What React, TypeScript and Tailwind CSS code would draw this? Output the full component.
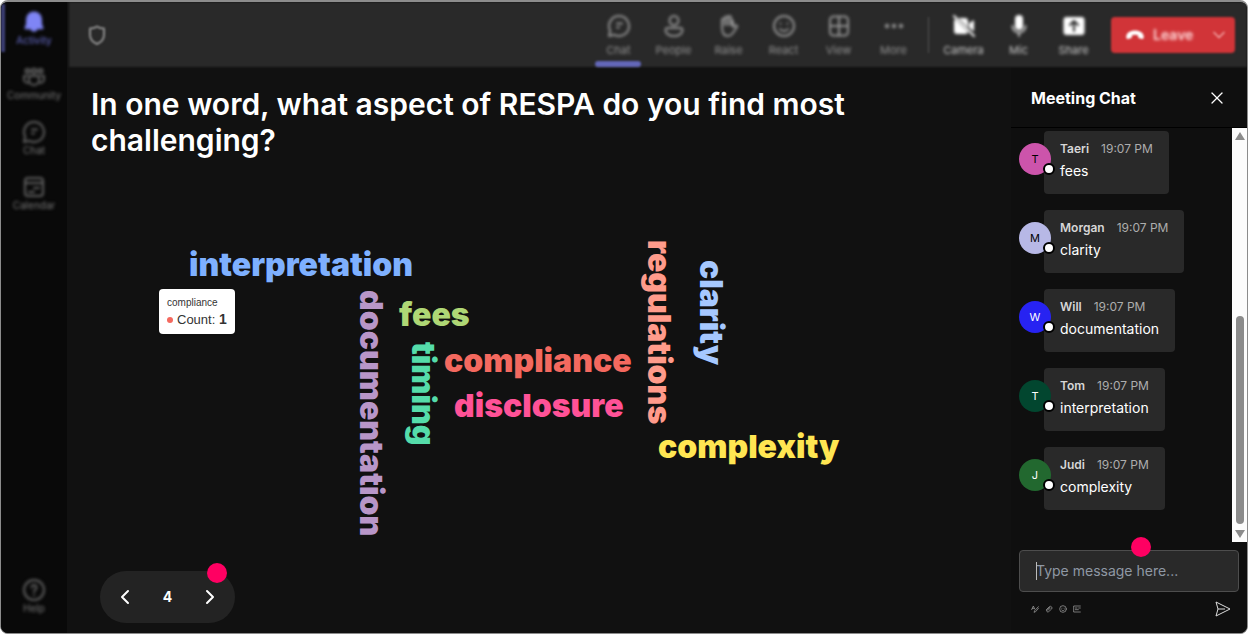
import React from 'react';
import { ChevronDown, ChevronLeft, ChevronRight, X } from 'lucide-react';

interface IconProps {
  className?: string;
}

interface NavItem {
  label: string;
  icon: React.FC<IconProps>;
  bright?: boolean;
  active?: boolean;
}

interface Message {
  name: string;
  text: string;
  time: string;
  avatar: string;
}

const Line: React.FC<IconProps & { children: React.ReactNode }> = ({ className, children }) => (
  <svg
    className={className}
    viewBox="0 0 24 24"
    fill="none"
    stroke="currentColor"
    strokeWidth={2}
    strokeLinecap="round"
    strokeLinejoin="round"
    aria-hidden="true"
  >
    {children}
  </svg>
);

const BellIcon: React.FC<IconProps> = ({ className }) => (
  <svg className={className} viewBox="0 0 24 24" fill="currentColor" aria-hidden="true">
    <path d="M12 1.500a8 8 0 0 0-8 8V14l-1.500 4c-.2.7.2 1.200 1 1.200h17c.8 0 1.200-.5 1-1.200L20 14V9.500a8 8 0 0 0-8-8zM8.500 19a3.600 3.600 0 0 0 7 0z" />
  </svg>
);

const CommunityIcon: React.FC<IconProps> = ({ className }) => (
  <Line className={className}>
    <circle cx="5.500" cy="6" r="2" />
    <circle cx="12" cy="6" r="2.300" />
    <circle cx="18.500" cy="6" r="2" />
    <path d="M7 11h10v4a5 5 0 0 1-10 0zM4.500 11H2v3a4 4 0 0 0 4 4M19.500 11H22v3a4 4 0 0 1-4 4" />
  </Line>
);

const ChatIcon: React.FC<IconProps> = ({ className }) => (
  <Line className={className}>
    <path d="M12 2a10 10 0 1 1-4.700 18.800L2 22l1.200-5.300A10 10 0 0 1 12 2z" />
    <path d="M10 9.500h5M10 13.500h2" />
  </Line>
);

const CalendarIcon: React.FC<IconProps> = ({ className }) => (
  <Line className={className}>
    <rect x="3" y="3" width="18" height="18" rx="3" />
    <path d="M3 8h18M12 13h5M7 17h5" />
  </Line>
);

const HelpIcon: React.FC<IconProps> = ({ className }) => (
  <Line className={className}>
    <circle cx="12" cy="12" r="10" />
    <path d="M9.500 9.500a2.500 2.500 0 1 1 4 2c-1 .7-1.500 1.200-1.500 2.500M12 17v.2" />
  </Line>
);

const ShieldIcon: React.FC<IconProps> = ({ className }) => (
  <Line className={className}>
    <path d="M12 3.500c2 1.500 4.500 2 7 2V12c0 4-2.500 7-7 9-4.500-2-7-5-7-9V5.500c2.500 0 5-.5 7-2z" />
  </Line>
);

const PeopleIcon: React.FC<IconProps> = ({ className }) => (
  <Line className={className}>
    <circle cx="12" cy="6.500" r="4.500" />
    <path d="M5.500 14h13c1.200 0 2 .8 2 2 0 3.500-3.500 6-8.500 6s-8.500-2.500-8.500-6c0-1.200.8-2 2-2z" />
  </Line>
);

const HandIcon: React.FC<IconProps> = ({ className }) => (
  <Line className={className}>
    <path d="M5 13V6a1.500 1.500 0 0 1 3 0V4a1.500 1.500 0 0 1 3 0v-.5a1.500 1.500 0 0 1 3 0V6a1.500 1.500 0 0 1 2 1.500V13l2-1.500c1.500-.7 2.500.5 2 1.500l-4.500 6.500C14 21.500 13 22 11 22c-4 0-6-3-6-9z" />
    <path d="M8 6v5M11 4v7M14 6v5" />
  </Line>
);

const SmileIcon: React.FC<IconProps> = ({ className }) => (
  <Line className={className}>
    <circle cx="12" cy="12" r="10" />
    <path d="M8 15c1 1.300 2.300 2 4 2s3-.7 4-2M8.500 9.500v.2M15.500 9.500v.2" />
  </Line>
);

const GridIcon: React.FC<IconProps> = ({ className }) => (
  <Line className={className}>
    <rect x="3" y="2.500" width="18" height="19" rx="3.500" />
    <path d="M12 2.500v19M3 12h18" />
  </Line>
);

const MoreIcon: React.FC<IconProps> = ({ className }) => (
  <svg className={className} viewBox="0 0 24 24" fill="currentColor" aria-hidden="true">
    <circle cx="5" cy="12" r="2.200" />
    <circle cx="12" cy="12" r="2.200" />
    <circle cx="19" cy="12" r="2.200" />
  </svg>
);

const CameraOffIcon: React.FC<IconProps> = ({ className }) => (
  <svg className={className} viewBox="0 0 24 24" fill="currentColor" aria-hidden="true">
    <path d="M6.500 4H13a3 3 0 0 1 3 3v6.500zM3 5l13 13a3 3 0 0 1-2 2H5a3 3 0 0 1-3-3V7c0-.8.4-1.500 1-2zM17 9.500l4-3c.5-.4 1 0 1 .5v10.500l-5-4z" />
    <path d="m2 2 20 20" stroke="currentColor" strokeWidth="2" strokeLinecap="round" />
  </svg>
);

const MicIcon: React.FC<IconProps> = ({ className }) => (
  <svg className={className} viewBox="0 0 24 24" fill="currentColor" aria-hidden="true">
    <rect x="8" y="1" width="8" height="15" rx="4" />
    <path
      d="M5.500 12a6.500 6.500 0 0 0 13 0M12 18.500V22"
      fill="none"
      stroke="currentColor"
      strokeOpacity="0.7"
      strokeWidth="2"
      strokeLinecap="round"
    />
  </svg>
);

const ShareIcon: React.FC<IconProps> = ({ className }) => (
  <svg className={className} viewBox="0 0 24 24" fill="currentColor" aria-hidden="true">
    <rect x="1.500" y="3" width="21" height="18" rx="3" />
    <path
      d="M12 17V7.500M8 11l4-4 4 4"
      fill="none"
      stroke="#292929"
      strokeWidth="2"
      strokeLinecap="round"
      strokeLinejoin="round"
    />
  </svg>
);

const HangUpIcon: React.FC<IconProps> = ({ className }) => (
  <svg className={className} viewBox="0 0 24 24" fill="currentColor" aria-hidden="true">
    <path d="M12 6.500c6 0 10.500 3 10.500 7.500 0 2-.8 3-2.300 2.700l-3-.7c-1-.2-1.400-.8-1.500-1.800l-.2-2c-2.300-.8-4.700-.8-7 0l-.2 2c-.1 1-.5 1.600-1.500 1.800l-3 .7C2.300 17 1.500 16 1.500 14 1.500 9.500 6 6.500 12 6.500z" />
  </svg>
);

const FormatIcon: React.FC<IconProps> = ({ className }) => (
  <Line className={className}>
    <path d="m2 14 5-11 4 9M4 10h5M22 5 11 17l-2 5 5-2L23 9" />
  </Line>
);

const ClipIcon: React.FC<IconProps> = ({ className }) => (
  <Line className={className}>
    <path d="m4 14 9-9a5 5 0 0 1 7 7l-9 8a4 4 0 0 1-6-5l9-8M9 16l7-7" />
  </Line>
);

const StickerIcon: React.FC<IconProps> = ({ className }) => (
  <Line className={className}>
    <path d="M22 3H2v18h20M7 9h5M7 14h9M17 9h5" />
  </Line>
);

const SendIcon: React.FC<IconProps> = ({ className }) => (
  <svg
    className={className}
    viewBox="0 0 16 16"
    fill="none"
    stroke="currentColor"
    strokeLinejoin="round"
    aria-hidden="true"
  >
    <path d="M1 1l14 7-14 7 2-7zM3 8h7" />
  </svg>
);

const sideItems: NavItem[] = [
  { label: 'Activity', icon: BellIcon, active: true },
  { label: 'Community', icon: CommunityIcon },
  { label: 'Chat', icon: ChatIcon },
  { label: 'Calendar', icon: CalendarIcon },
];

const meetingItems: NavItem[] = [
  { label: 'Chat', icon: ChatIcon, active: true },
  { label: 'People', icon: PeopleIcon },
  { label: 'Raise', icon: HandIcon },
  { label: 'React', icon: SmileIcon },
  { label: 'View', icon: GridIcon },
  { label: 'More', icon: MoreIcon },
];

const deviceItems: NavItem[] = [
  { label: 'Camera', icon: CameraOffIcon, bright: true },
  { label: 'Mic', icon: MicIcon, bright: true },
  { label: 'Share', icon: ShareIcon, bright: true },
];

const words = [
  { text: 'interpretation', place: 'left-[122px] top-[89px] text-[#7eb0ff]' },
  { text: 'fees', place: 'left-[332px] top-[139px] text-[#afd775]' },
  { text: 'compliance', place: 'left-[377px] top-[185px] text-[#f4695f]' },
  { text: 'disclosure', place: 'left-[387px] top-[230px] text-[#ff5297]' },
  { text: 'complexity', place: 'left-[591px] top-[271px] text-[#ffe652]' },
  { text: 'documentation', place: 'left-[286px] top-[132px] text-[#b896c8] [writing-mode:vertical-rl]' },
  { text: 'timing', place: 'left-[338px] top-[184px] text-[#55dcaa] [writing-mode:vertical-rl]' },
  { text: 'regulations', place: 'left-[574px] top-[82px] text-[#ff9b8b] [writing-mode:vertical-rl]' },
  { text: 'clarity', place: 'left-[626px] top-[102px] text-[#a6c8ff] [writing-mode:vertical-rl]' },
];

const messages: Message[] = [
  { name: 'Taeri', text: 'fees', time: '19:07 PM', avatar: 'bg-[#cc54ab] text-black' },
  { name: 'Morgan', text: 'clarity', time: '19:07 PM', avatar: 'bg-[#b7b8e6] text-black' },
  { name: 'Will', text: 'documentation', time: '19:07 PM', avatar: 'bg-[#2723f2] text-white' },
  { name: 'Tom', text: 'interpretation', time: '19:07 PM', avatar: 'bg-[#02462f] text-white' },
  { name: 'Judi', text: 'complexity', time: '19:07 PM', avatar: 'bg-[#22682f] text-white' },
];

const SideButton: React.FC<{ item: NavItem }> = ({ item }) => {
  const Icon = item.icon;

  return (
    <button
      type="button"
      className={`relative flex h-[55px] w-full flex-col items-center pt-1.5 blur-[1px] ${
        item.active ? 'text-[#7f85f5]' : 'text-[#606060]'
      }`}
    >
      {item.active && <span className="absolute top-0 left-0 h-12 w-1 bg-[#3d3f76]" />}
      <Icon className="h-6 w-6 blur-[1px]" />
      <span
        className={`text-[10px] leading-3 blur-[1px] ${item.active ? 'text-[#6a6fd0]' : 'text-[#7a7a7a]'}`}
      >
        {item.label}
      </span>
    </button>
  );
};

const ToolButton: React.FC<{ item: NavItem }> = ({ item }) => {
  const Icon = item.icon;

  return (
    <button
      type="button"
      className="relative flex h-full w-[55px] flex-col items-center pt-3 text-[#929292] blur-[1px]"
    >
      <Icon className={`h-6 w-6 blur-[1px] ${item.bright ? 'text-white' : ''}`} />
      <span className={`mt-1 text-[11px] leading-4 blur-[1px] ${item.bright ? 'text-[#c8c8c8]' : ''}`}>
        {item.label}
      </span>
      {item.active && (
        <span className="absolute bottom-0 left-1 h-1.5 w-[46px] rounded-sm bg-[#6367b8]" />
      )}
    </button>
  );
};

const Sidebar = () => (
  <nav className="flex w-[66px] shrink-0 flex-col bg-[#090909] pt-0.5">
    {sideItems.map((item) => (
      <SideButton key={item.label} item={item} />
    ))}
    <div className="mt-auto pb-1.5">
      <SideButton item={{ label: 'Help', icon: HelpIcon }} />
    </div>
  </nav>
);

const TopBar = () => (
  <header className="relative ml-0.5 flex h-[65px] items-center pr-3 pl-4">
    <span className="absolute inset-0 bg-[#292929] blur-[1px]" />
    <ShieldIcon className="relative h-6 w-6 text-[#8c8c8c] blur-[1px]" />
    <div className="relative ml-auto flex h-full items-center">
      {meetingItems.map((item) => (
        <ToolButton key={item.label} item={item} />
      ))}
      <span className="mx-[7px] h-9 w-px bg-[#555] blur-[1px]" />
      {deviceItems.map((item) => (
        <ToolButton key={item.label} item={item} />
      ))}
    </div>
    <div className="relative ml-2.5 flex h-9 w-[124px] items-center text-[#ffdcdc] blur-[1px]">
      <span className="absolute inset-0 rounded bg-[#d13438]" />
      <button type="button" className="relative flex h-full flex-1 items-center pl-3.5">
        <HangUpIcon className="h-5 w-5 text-white" />
        <span className="ml-2 text-sm font-semibold blur-[1px]">Leave</span>
      </button>
      <button type="button" aria-label="Leave options" className="relative flex h-full w-8 items-center justify-center">
        <ChevronDown className="h-5 w-5 text-[#f0a0a0]" />
      </button>
    </div>
  </header>
);

const WordCloud = () => (
  <div className="relative flex-1">
    {words.map((word) => (
      <span
        key={word.text}
        className={`absolute font-['Inter',sans-serif] text-[32px] leading-9 font-black whitespace-nowrap ${word.place}`}
      >
        {word.text}
      </span>
    ))}
    <div className="absolute top-[131px] left-[92px] rounded-sm bg-white px-2 py-1.5 font-['Liberation_Sans',sans-serif] text-[#333] shadow">
      <p className="text-[10px] leading-4">compliance</p>
      <p className="flex items-center text-[13px] leading-3">
        <span className="mr-1 h-1.5 w-1.5 rounded-full bg-[#f4695f]" />
        <span className="leading-4">
          Count:&nbsp;<b className="text-sm leading-4">1</b>
        </span>
      </p>
    </div>
  </div>
);

const Pager = () => (
  <div className="relative mb-2.5 ml-[33px] flex h-[52px] w-[135px] items-center justify-between rounded-full bg-[#232323] px-[11px] text-white">
    <button type="button" aria-label="Previous" className="p-0.5">
      <ChevronLeft className="h-6 w-6" />
    </button>
    <span className="text-sm font-bold">4</span>
    <button type="button" aria-label="Next" className="p-0.5">
      <ChevronRight className="h-6 w-6" />
    </button>
    <span className="absolute -top-2 right-2 h-5 w-5 rounded-full bg-[#ff0062]" />
  </div>
);

const MessageRow: React.FC<{ message: Message }> = ({ message }) => (
  <li className="flex items-start">
    <div
      className={`relative z-10 mt-3 -mr-[7px] flex h-8 w-8 shrink-0 items-center justify-center rounded-full text-[11px] ${message.avatar}`}
    >
      {message.name[0]}
      <span className="absolute -right-1 bottom-0 h-3 w-3 rounded-full border-2 border-black bg-white" />
    </div>
    <div className="rounded bg-[#292929] px-4 pt-2 pb-[11px]">
      <div className="flex gap-3 text-xs leading-5">
        <span className="font-semibold text-[#d6d6d6]">{message.name}</span>
        <span className="text-[#adadad]">{message.time}</span>
      </div>
      <p className="text-sm leading-6 text-white">{message.text}</p>
    </div>
  </li>
);

const Scrollbar = () => (
  <div className="flex w-[15px] shrink-0 flex-col items-center bg-[#fcfcfc] py-1" aria-hidden="true">
    <svg className="h-2 w-2.5 text-[#8b8b8b]" viewBox="0 0 10 8" fill="currentColor">
      <path d="M5 0l5 8H0z" />
    </svg>
    <div className="flex w-2 flex-1 flex-col justify-end py-1.5">
      <div className="h-[55%] rounded-full bg-[#8b8b8b]" />
    </div>
    <svg className="h-2 w-2.5 text-[#8b8b8b]" viewBox="0 0 10 8" fill="currentColor">
      <path d="M5 8L0 0h10z" />
    </svg>
  </div>
);

const Composer = () => (
  <form className="relative px-2 pt-2" onSubmit={(e) => e.preventDefault()}>
    <input
      type="text"
      aria-label="Message"
      placeholder="Type message here..."
      className="h-[42px] w-full rounded border border-[#4d4d4d] bg-[#292929] px-4 pb-0.5 text-sm text-white outline-none placeholder:text-[#8f98a4]"
    />
    <span className="absolute top-5 left-[25px] h-[18px] w-px bg-[#bbb]" />
    <span className="absolute -top-[5px] left-[120px] h-5 w-5 rounded-full bg-[#ff0062]" />
    <div className="flex h-[41px] items-center gap-1.5 pb-2 pl-3 text-[#aaa]">
      <button type="button" aria-label="Format">
        <FormatIcon className="block h-2 w-2" />
      </button>
      <button type="button" aria-label="Attach">
        <ClipIcon className="block h-2 w-2" />
      </button>
      <button type="button" aria-label="Emoji">
        <SmileIcon className="block h-2 w-2" />
      </button>
      <button type="button" aria-label="Sticker">
        <StickerIcon className="block h-2 w-2" />
      </button>
      <button type="submit" aria-label="Send" className="mr-2 ml-auto text-[#ddd]">
        <SendIcon className="block h-4 w-4" />
      </button>
    </div>
  </form>
);

const ChatPanel = () => (
  <aside className="flex w-[236px] shrink-0 flex-col bg-[#0f0f0f]">
    <div className="flex h-[61px] items-center justify-between border-b border-black px-5 pt-0.5 text-white">
      <h2 className="text-base font-bold">Meeting Chat</h2>
      <button type="button" aria-label="Close chat">
        <X className="h-5 w-5" strokeWidth={1.5} />
      </button>
    </div>
    <div className="flex flex-1">
      <ul className="flex flex-1 flex-col gap-4 pt-[3px] pl-2">
        {messages.map((message) => (
          <MessageRow key={message.name} message={message} />
        ))}
      </ul>
      <Scrollbar />
    </div>
    <Composer />
  </aside>
);

export default function App() {
  return (
    <div className="flex min-h-screen bg-white font-['Inter',sans-serif]">
      <div className="flex flex-1 overflow-hidden rounded-lg border border-t-2 border-[#8c8c8c] bg-[#111]">
        <Sidebar />
        <div className="flex min-w-0 flex-1 flex-col">
          <TopBar />
          <div className="flex flex-1">
            <main className="flex min-w-0 flex-1 flex-col">
              <h1 className="px-6 pt-[19px] text-3xl leading-9 font-semibold text-white">
                In one word, what aspect of RESPA do you find most challenging?
              </h1>
              <WordCloud />
              <Pager />
            </main>
            <ChatPanel />
          </div>
        </div>
      </div>
    </div>
  );
}
